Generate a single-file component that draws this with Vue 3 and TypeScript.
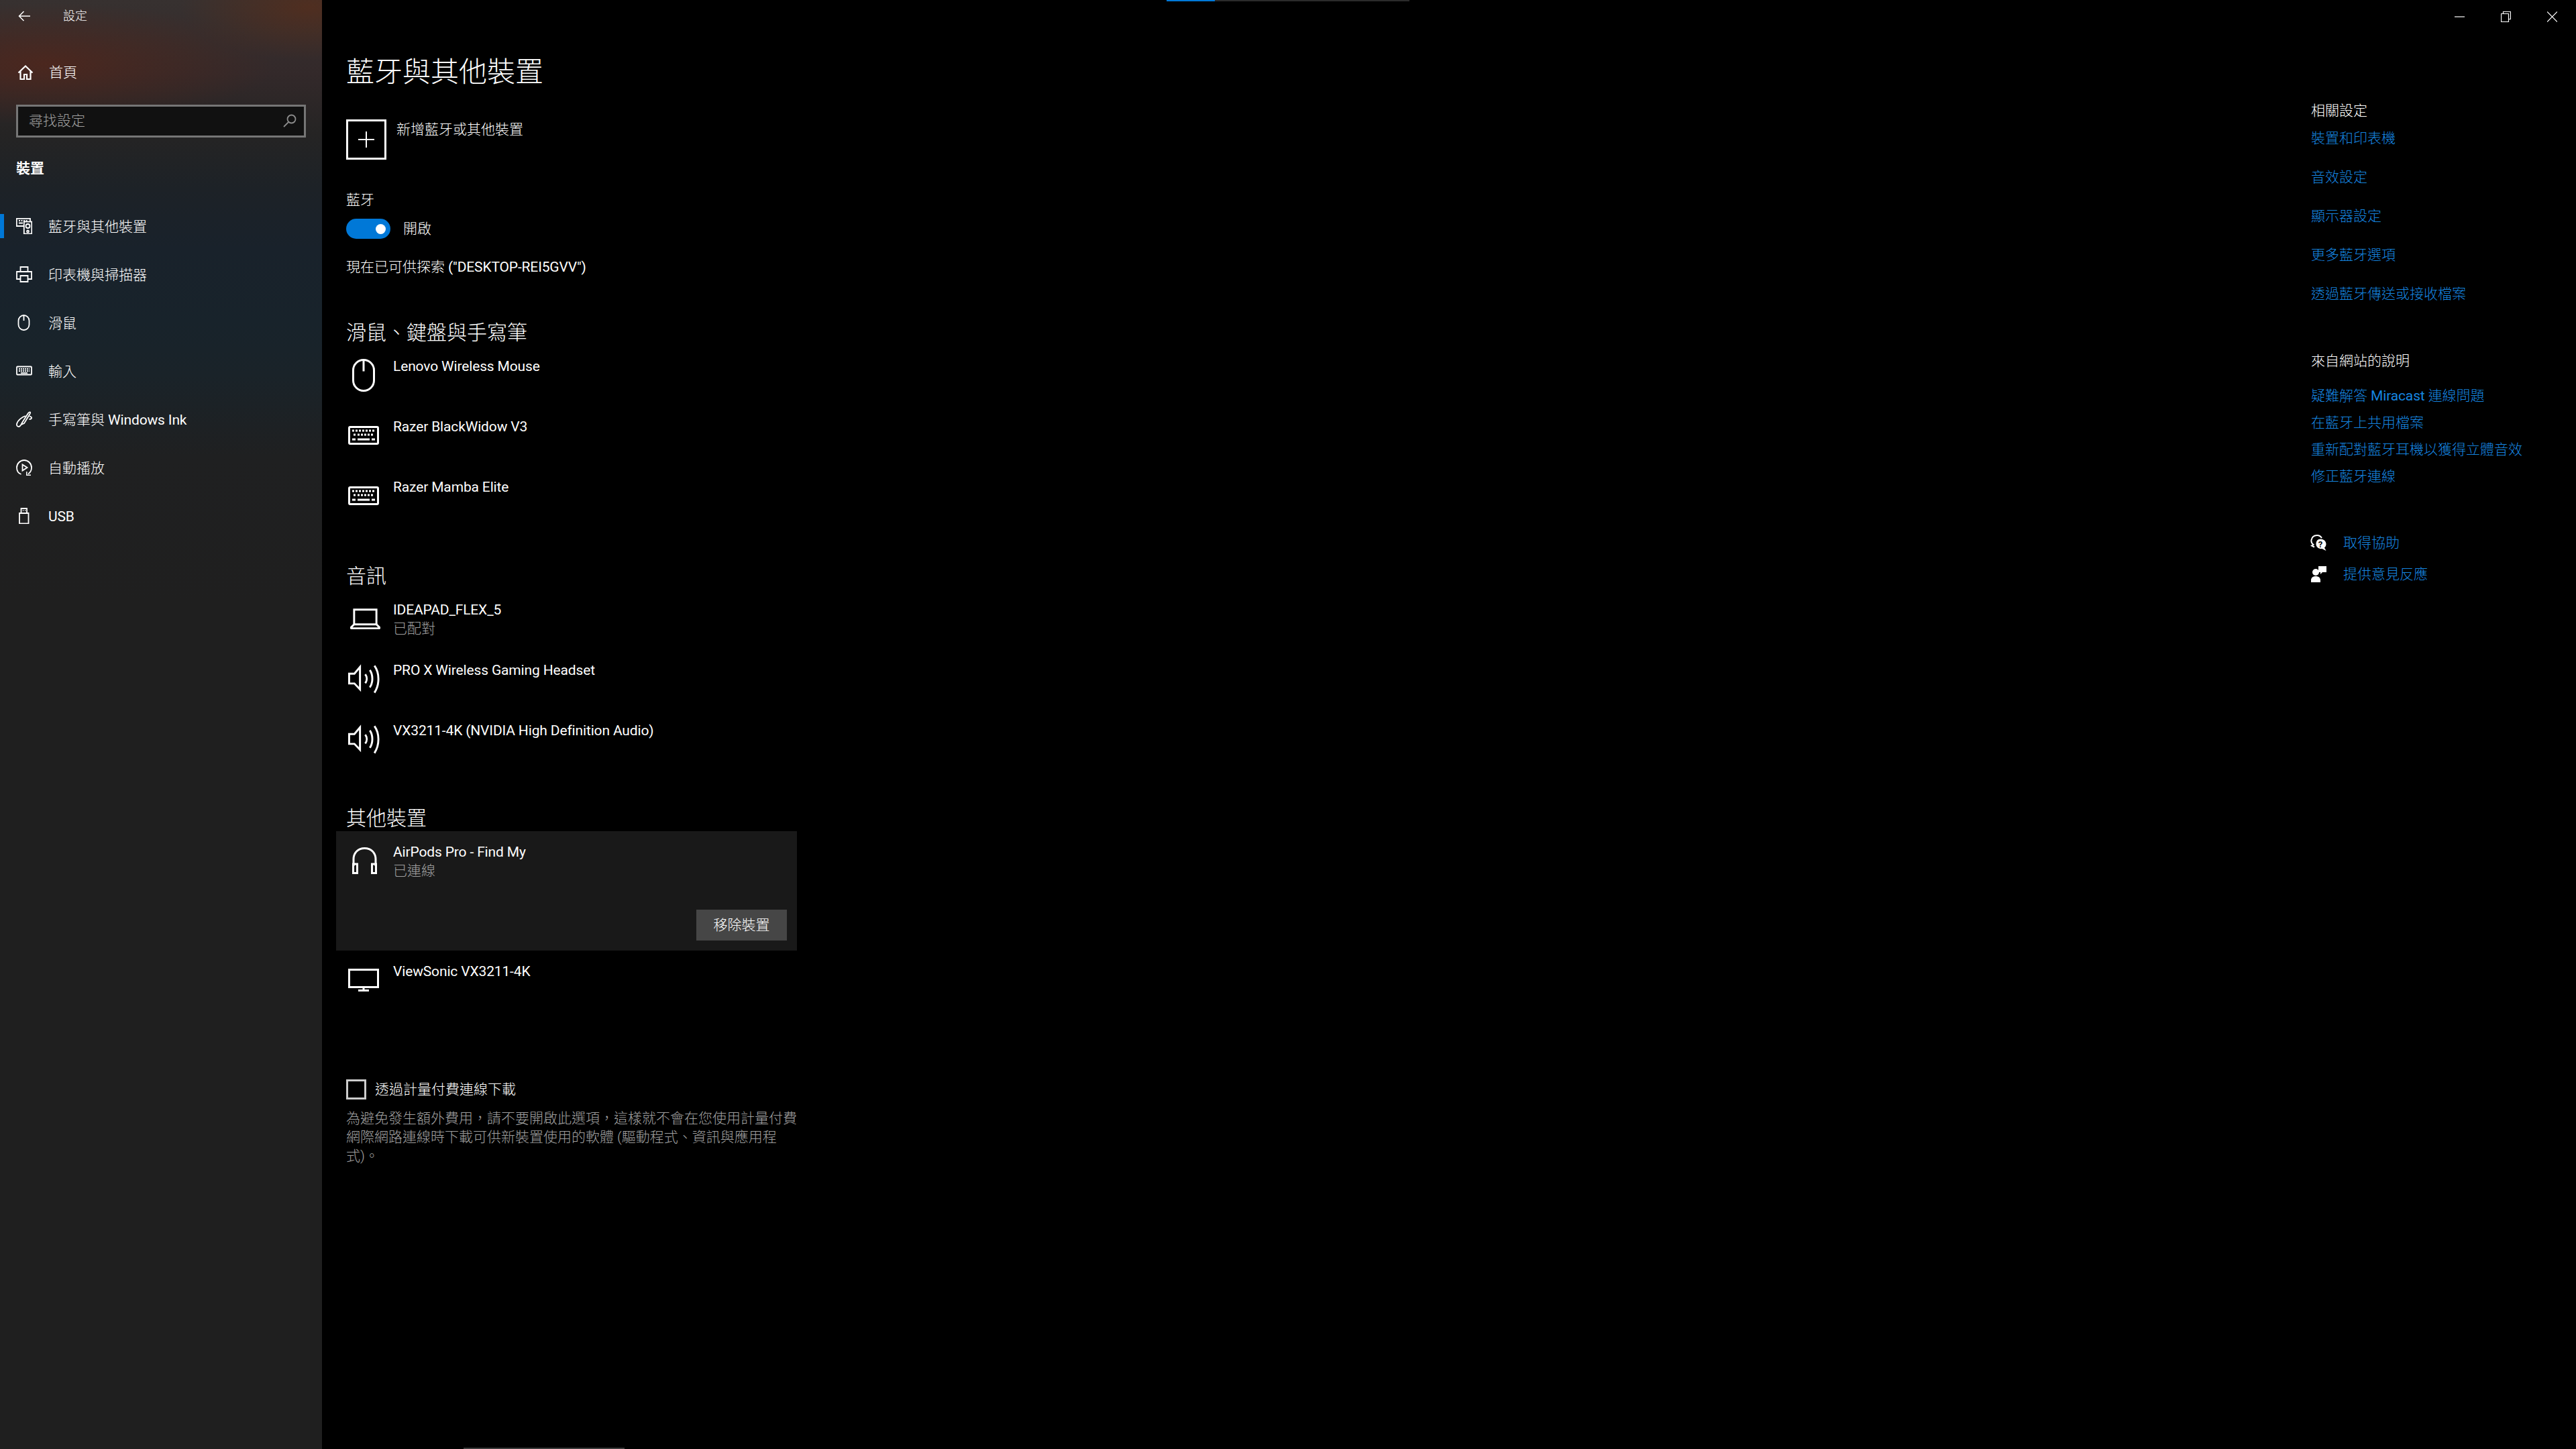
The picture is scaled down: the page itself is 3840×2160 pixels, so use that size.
<template>
  <div class="screen">
    <aside class="sidebar">
      <div class="titlebar">
        <svg class="back" width="18" height="16" viewBox="0 0 18 16"><path d="M18 8H1.5M8.5 1 1.5 8l7 7" /></svg>
        <span>設定</span>
      </div>
      <div class="home">
        <svg width="24" height="22" viewBox="0 0 24 22"><path d="M1.5 11.5 12 1.5l10.500 10M4.500 9v12h5.500v-7h4v7h5.500V9" /></svg>
        <span>首頁</span>
      </div>
      <div class="search">
        <span>尋找設定</span>
        <svg width="20" height="20" viewBox="0 0 20 20"><circle cx="12.500" cy="7.500" r="6" /><path d="M8 12 1 19" /></svg>
      </div>
      <div class="group-label">裝置</div>
      <nav class="nav">
        <div v-for="item in navItems" :key="item.label" class="nav-item" :class="{ active: item.active }">
          <svg class="nav-icon" width="24" height="24" viewBox="0 0 24 24" v-html="item.icon"></svg>
          <span class="nav-label">{{ item.label }}<span v-if="item.latin" class="latin">{{ item.latin }}</span></span>
        </div>
      </nav>
    </aside>

    <main class="content">
      <h1>藍牙與其他裝置</h1>
      <div class="add-row">
        <div class="add-btn"><svg width="24" height="24" viewBox="0 0 24 24"><path d="M12 0v24M0 12h24" /></svg></div>
        <span>新增藍牙或其他裝置</span>
      </div>
      <div class="bt-label">藍牙</div>
      <div class="toggle-row">
        <div class="toggle"><div class="knob"></div></div>
        <span>開啟</span>
      </div>
      <div class="discover">現在已可供探索<span class="latin"> ("DESKTOP-REI5GVV")</span></div>

      <template v-for="section in sections" :key="section.title">
        <h2 :class="section.cls">{{ section.title }}</h2>
        <div v-for="dev in section.devices" :key="dev.name" class="device" :class="{ selected: dev.selected }">
          <div class="device-row">
            <div class="device-icon">
              <svg :class="`icon-${dev.icon}`" :width="icons[dev.icon].w" :height="icons[dev.icon].h" :viewBox="`0 0 ${icons[dev.icon].w} ${icons[dev.icon].h}`" v-html="icons[dev.icon].body"></svg>
            </div>
            <div class="device-text">
              <div class="latin">{{ dev.name }}</div>
              <div v-if="dev.status" class="status">{{ dev.status }}</div>
            </div>
          </div>
          <div v-if="dev.selected" class="device-actions"><button class="remove">移除裝置</button></div>
        </div>
      </template>

      <div class="metered">
        <div class="checkbox"></div>
        <span>透過計量付費連線下載</span>
      </div>
      <p class="metered-desc">為避免發生額外費用，請不要開啟此選項，這樣就不會在您使用計量付費網際網路連線時下載可供新裝置使用的軟體 (驅動程式、資訊與應用程式)。</p>
    </main>

    <aside class="related">
      <div class="rel-title">相關設定</div>
      <div class="rel-links first">
        <a v-for="l in relatedLinks" :key="l">{{ l }}</a>
      </div>
      <div class="rel-title second">來自網站的說明</div>
      <div class="rel-links web">
        <a>疑難解答<span class="latin"> Miracast </span>連線問題</a>
        <a v-for="l in webLinks" :key="l">{{ l }}</a>
      </div>
      <div class="help-row help-first">
        <svg width="24" height="24" viewBox="0 0 24 24">
          <path class="line" d="M6 18.500 2 16.500 4.500 15C2 13 1 11 1.500 8 2.500 3 6 1 10 1c3 0 5.500 1.500 7 4" />
          <path class="solid" d="M15 6.500c4.500 0 8.500 3 8.500 7.500 0 2.500-1 4-2.500 5.500l2.500 4.500-6-3c-5 .5-9-2.500-9-7 0-4.500 2.500-7.500 6.500-7.500Z" />
          <text x="15" y="18.500" class="q">?</text>
        </svg>
        <a>取得協助</a>
      </div>
      <div class="help-row">
        <svg width="24" height="24" viewBox="0 0 24 24">
          <circle class="solid" cx="8" cy="9" r="5" />
          <path class="solid" d="M1 24v-3c0-4 3-6 7-6s7 2 7 6v3Z" />
          <path class="solid" d="M12 0h12v9h-6l-3 3V9h-3Z" />
        </svg>
        <a>提供意見反應</a>
      </div>
    </aside>

    <!-- window chrome that sits over the page -->
    <div class="win-controls">
      <svg width="15" height="16" viewBox="0 0 15 16"><path d="M0 8h15" /></svg>
      <svg width="15" height="16" viewBox="0 0 15 16"><path d="M3.500 3.500V.5h11v11h-3M.5 3.500h11v12H.5Z" /></svg>
      <svg width="15" height="16" viewBox="0 0 15 16"><path d="M0 .5 15 15.500M15 .5 0 15.500" /></svg>
    </div>
    <div class="top-progress"><div class="top-progress-fill"></div></div>
    <div class="bottom-scroll"></div>
  </div>
</template>

<script setup lang="ts">
interface Device {
  name: string
  icon: string
  status?: string
  selected?: boolean
}

interface NavItem {
  label: string
  latin?: string
  active?: boolean
  icon: string
}

const icons: Record<string, { w: number; h: number; body: string }> = {
  mouse: {
    w: 34,
    h: 49,
    body: '<rect x="1.500" y="1.500" width="31" height="46" rx="15.500" ry="15.500"/><path d="M17 1.500v17"/>',
  },
  keyboard: {
    w: 46,
    h: 28,
    body:
      '<rect x="1.500" y="1.500" width="43" height="25" rx="1.500"/>' +
      '<path d="M6 7h3M11 7h3M16 7h3M21 7h3M26 7h3M31 7h3M36 7h3" /><path d="M8 13h3M14 13h3M19 13h3M24 13h3M29 13h3M34 13h3"/><path d="M6 20h5M14 20h18M35 20h5"/>',
  },
  laptop: {
    w: 46,
    h: 31,
    body: '<path d="M6 24V1.500h34V24"/><path d="M6 24h34l4.500 4.500c.5 1 0 1.500-1 1.500H2.500c-1 0-1.500-.5-1-1.500Z"/>',
  },
  speaker: {
    w: 49,
    h: 44,
    body:
      '<path d="M1.500 14v15h8L18 38V4l-8.500 10Z"/><path d="M26 15c3 4 3 9.500 0 13.500"/><path d="M33 8.500c5 7 5 19.500 0 26.500"/><path d="M40 2c8 11 8 29 0 41"/>',
  },
  headset: {
    w: 37,
    h: 40,
    body:
      '<path d="M2 28V18C2 8 9 1.500 18.500 1.500S35 8 35 18v10"/><path d="M1.500 25h6v13.500h-6ZM29.500 25h6v13.500h-6Z"/>',
  },
  monitor: {
    w: 46,
    h: 34,
    body: '<rect x="1.500" y="1.500" width="43" height="26" /><path d="M23 28v5M15 32.500h16"/>',
  },
}

const navItems: NavItem[] = [
  {
    label: '藍牙與其他裝置',
    active: true,
    icon:
      '<path d="M21 5V.8H.8v11.200H11"/><path d="M4 4h2M7.500 4h2M11 4h2M14.500 4h2M4 7.500h6" stroke-width="1.500"/>' +
      '<rect x="11.800" y="5.500" width="11.500" height="18"/><circle cx="17.500" cy="12" r="3"/><circle cx="17.500" cy="20" r="1.500"/>',
  },
  {
    label: '印表機與掃描器',
    icon: '<path d="M6.500 8V1h11v7M6.500 19H1V8h22v11h-5.500"/><path d="M6.500 14h11v9h-11Z"/>',
  },
  {
    label: '滑鼠',
    icon: '<rect x="3.500" y="1" width="16" height="22" rx="8" ry="8"/><path d="M11.500 1v8"/>',
  },
  {
    label: '輸入',
    icon:
      '<rect x="1" y="5.500" width="22" height="12" rx="1"/><path d="M4 9h16" stroke-width="2" stroke-dasharray="2 1"/><path d="M4 12h16" stroke-width="1.500" stroke-dasharray="2 1"/><path d="M7 15h10" stroke-width="1.500"/>',
  },
  {
    label: '手寫筆與',
    latin: ' Windows Ink',
    icon:
      '<path d="M9 17 18 3c1-1.500 2.500-2 3-1.500s0 2-1 3.500l-8 13-4.500 2Z"/><path d="M20 7.500c2 .5 3.500 1.500 3 3-.5 1-2 1.500-3.500 1.500"/><path d="M14 7c-5 1.500-12 7-13 12-.5 3 1.500 4 3 4 1.500 0 3-2 3-3"/>',
  },
  {
    label: '自動播放',
    icon:
      '<path d="M7.500 22C3.500 20.500 1 16.500 1 12 1 6 6 1 12 1s11 5 11 11c0 4-2 7.500-5 9.500"/><path d="M9.500 7.500 16.500 12l-7 4.500Z"/><path class="solid" d="M15 18v6h7v-1.500h-5.500V18Z"/>',
  },
  {
    label: '',
    latin: 'USB',
    icon:
      '<path d="M5 8h13.500v15.500H5ZM7.500 8V1h8.500v7"/><path d="M10 4h1M13 4h1" stroke-width="1.500"/>',
  },
]

const sections: { title: string; cls: string; devices: Device[] }[] = [
  {
    title: '滑鼠、鍵盤與手寫筆',
    cls: 'sec-input',
    devices: [
      { name: 'Lenovo Wireless Mouse', icon: 'mouse' },
      { name: 'Razer BlackWidow V3', icon: 'keyboard' },
      { name: 'Razer Mamba Elite', icon: 'keyboard' },
    ],
  },
  {
    title: '音訊',
    cls: 'sec-audio',
    devices: [
      { name: 'IDEAPAD_FLEX_5', icon: 'laptop', status: '已配對' },
      { name: 'PRO X Wireless Gaming Headset', icon: 'speaker' },
      { name: 'VX3211-4K (NVIDIA High Definition Audio)', icon: 'speaker' },
    ],
  },
  {
    title: '其他裝置',
    cls: 'sec-other',
    devices: [
      { name: 'AirPods Pro - Find My', icon: 'headset', status: '已連線', selected: true },
      { name: 'ViewSonic VX3211-4K', icon: 'monitor' },
    ],
  },
]

const relatedLinks = ['裝置和印表機', '音效設定', '顯示器設定', '更多藍牙選項', '透過藍牙傳送或接收檔案']
const webLinks = ['在藍牙上共用檔案', '重新配對藍牙耳機以獲得立體音效', '修正藍牙連線']
</script>

<style>
html,
body {
  margin: 0;
  background: #000;
}
svg path,
svg rect,
svg circle {
  fill: none;
  stroke: #fff;
  stroke-width: 3;
}
svg .solid {
  fill: #fff;
  stroke: none;
}
svg .line {
  stroke-width: 2;
}
svg .q {
  font: 700 13px "Roboto", sans-serif;
  fill: #000;
  text-anchor: middle;
}
.nav-icon path,
.nav-icon rect,
.nav-icon circle {
  stroke-width: 1.8;
}
</style>

<style scoped>
.screen {
  position: relative;
  display: flex;
  width: 3840px;
  height: 2160px;
  overflow: hidden;
  background: #000;
  color: #fff;
  font-family: Roboto, "Noto Sans CJK TC", sans-serif;
  font-size: 21px;
  font-weight: 300;
  line-height: 30px;
}
.latin {
  font-weight: 400;
  letter-spacing: -0.15px;
  white-space: pre;
}
.sidebar {
  width: 480px;
  height: 2160px;
  flex-shrink: 0;
  background:
    radial-gradient(ellipse 190px 80px at 460px 10px, rgba(90, 45, 25, 0.7), transparent),
    radial-gradient(ellipse 340px 90px at 70px 95px, rgba(85, 38, 25, 0.7), transparent),
    linear-gradient(180deg, #373130 0, #33292a 110px, #252424 200px, #1d2227 280px, #19222b 370px, #18232b 480px, #1a2329 560px, #1f2021 680px, #1f1f1f 900px, #1f1f1f 2160px);
}
.titlebar {
  display: flex;
  align-items: center;
  height: 48px;
  padding-left: 27px;
  font-size: 18px;
}
.titlebar .back {
  margin-right: 49px;
}
.titlebar .back path {
  stroke-width: 1.5;
}
.home {
  display: flex;
  align-items: center;
  height: 48px;
  margin-top: 36px;
  padding-left: 26px;
}
.home svg {
  margin-right: 23px;
}
.home svg path {
  stroke-width: 2.2;
}
.search {
  display: flex;
  align-items: center;
  justify-content: space-between;
  box-sizing: border-box;
  width: 432px;
  height: 49px;
  margin: 24px 0 0 24px;
  padding: 0 11px 2px 16px;
  background: #111;
  border: 3px solid #767676;
  color: #a0a0a0;
}
.search svg circle,
.search svg path {
  stroke: #8c8c8c;
  stroke-width: 1.8;
}
.group-label {
  margin: 31px 0 0 24px;
  font-weight: 700;
}
.nav {
  margin-top: 35px;
}
.nav-item {
  position: relative;
  display: flex;
  align-items: center;
  height: 72px;
  padding-left: 24px;
}
.nav-item .nav-icon {
  margin-right: 24px;
}
.nav-label {
  padding-top: 2px;
}
.nav-item.active::before {
  content: "";
  position: absolute;
  left: 0;
  top: 18px;
  width: 6px;
  height: 36px;
  background: #0078d7;
}
.content {
  width: 674px;
  margin-left: 36px;
  flex-shrink: 0;
}
h1 {
  margin: 76px 0 0;
  padding-top: 4px;
  font-size: 42px;
  font-weight: 300;
  line-height: 56px;
}
.add-row {
  display: flex;
  align-items: flex-start;
  gap: 15px;
  height: 60px;
  margin-top: 42px;
}
.add-btn {
  display: flex;
  align-items: center;
  justify-content: center;
  box-sizing: border-box;
  width: 60px;
  height: 60px;
  border: 3px solid #fff;
}
.add-btn svg path {
  stroke-width: 2;
}
.bt-label {
  margin-top: 45px;
}
.toggle-row {
  display: flex;
  align-items: center;
  gap: 19px;
  margin-top: 13px;
}
.toggle {
  display: flex;
  align-items: center;
  justify-content: flex-end;
  box-sizing: border-box;
  width: 66px;
  height: 30px;
  padding-right: 7px;
  border-radius: 15px;
  background: #0078d7;
}
.knob {
  width: 15px;
  height: 15px;
  border-radius: 50%;
  background: #fff;
}
.discover {
  margin-top: 26px;
  padding-top: 2px;
  line-height: 28px;
}
h2 {
  margin: 0;
  padding-top: 2px;
  font-size: 30px;
  font-weight: 300;
  line-height: 38px;
}
.sec-input {
  margin-top: 63px;
}
.sec-audio {
  margin-top: 53px;
}
.sec-other {
  margin-top: 51px;
}
.device {
  width: 687px;
  margin-left: -15px;
}
.device.selected {
  height: 178px;
  background: #191919;
}
.device-row {
  display: flex;
  height: 90px;
  padding-left: 15px;
}
.device-icon {
  display: flex;
  align-items: center;
  justify-content: center;
  width: 51px;
  height: 88px;
  margin-right: 19px;
}
.icon-laptop {
  margin-left: 6px;
}
.icon-speaker,
.icon-headset {
  margin-left: 3px;
}
.device-text {
  padding-top: 17px;
  line-height: 28px;
}
.status {
  color: #a0a0a0;
}
.device-actions {
  display: flex;
  justify-content: flex-end;
  margin-top: 27px;
  padding-right: 15px;
}
.remove {
  width: 135px;
  height: 46px;
  padding: 0;
  border: none;
  background: #464646;
  color: #fff;
  font: inherit;
}
.metered {
  display: flex;
  align-items: center;
  gap: 13px;
  margin-top: 102px;
}
.checkbox {
  box-sizing: border-box;
  width: 30px;
  height: 30px;
  border: 3px solid #ccc;
}
.metered-desc {
  margin: 14px 0 0;
  line-height: 28px;
  color: #a0a0a0;
}
.related {
  margin-left: 2255px;
  width: 395px;
  flex-shrink: 0;
  padding-top: 150px;
}
.rel-links {
  display: flex;
  flex-direction: column;
  align-items: flex-start;
}
.rel-links a,
.help-row a {
  color: #1585e0;
}
.rel-links.first {
  gap: 28px;
  margin-top: 11px;
}
.rel-title.second {
  margin-top: 70px;
}
.rel-links.web {
  gap: 10px;
  margin-top: 22px;
}
.help-row {
  display: flex;
  align-items: center;
  gap: 25px;
  margin: 17px 0 0 -1px;
}
.help-row.help-first {
  margin-top: 69px;
}
.win-controls {
  position: absolute;
  top: 17px;
  right: 28px;
  display: flex;
  gap: 54px;
}
.win-controls svg path {
  stroke-width: 1.2;
}
.top-progress {
  position: absolute;
  top: 0;
  left: 1739px;
  width: 362px;
  height: 2px;
  background: #2b2b2b;
}
.top-progress-fill {
  width: 72px;
  height: 2px;
  background: #0078d7;
}
.bottom-scroll {
  position: absolute;
  bottom: 0;
  left: 691px;
  width: 240px;
  height: 2px;
  background: #3a3a3a;
}
</style>
